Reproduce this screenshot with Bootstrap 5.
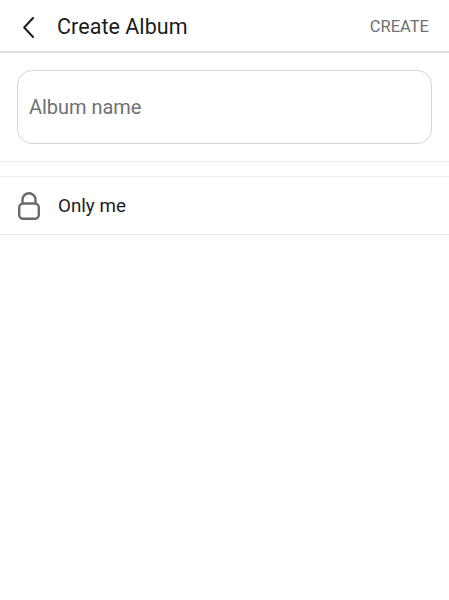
<!DOCTYPE html>
<html lang="en"><head><meta charset="utf-8">
<link href="https://cdn.jsdelivr.net/npm/bootstrap@5.3.0/dist/css/bootstrap.min.css" rel="stylesheet">
<style>
html,body{height:600px;overflow:hidden;background:#fff;font-family:Roboto,"Liberation Sans",sans-serif}
.top-bar{height:53px;border-bottom:2px solid #e0e0e4;padding:3px 20px 0 23px}
.top-title{font-size:21.5px;color:#1c1c1e;margin-left:23px;letter-spacing:.05px}
.top-action{font-size:16.5px;color:#6f7075}
.name-wrap{padding:17px;border-bottom:1px solid #ececee}
.name-box{height:74px;border:1px solid #d2d4d9;border-radius:15px;padding:0 11px;font-size:20px;color:#707074;letter-spacing:-.03px}
.priv-row{margin-top:14px;height:59px;padding:0 18px;border-top:1px solid #ececee;border-bottom:1px solid #ececee}
.priv-text{font-size:18.8px;color:#1c1c1e;margin-left:18px;padding-top:2px}
</style></head><body>
<div class="top-bar d-flex align-items-center">
<svg width="11" height="21" viewBox="0 0 11 21" fill="none" stroke="#1c1c1e" stroke-width="2" stroke-linecap="round" stroke-linejoin="round"><path d="M10 1 1.2 10.5 10 20"/></svg>
<div class="top-title flex-grow-1">Create Album</div>
<div class="top-action">CREATE</div>
</div>
<div class="name-wrap"><div class="name-box d-flex align-items-center">Album name</div></div>
<div class="priv-row d-flex align-items-center">
<svg width="22" height="28" viewBox="0 0 22 28" fill="none" stroke="#69696e" stroke-width="2.4"><rect x="1.2" y="11.5" width="19.6" height="15.3" rx="4"/><path d="M4.5 11.5V7.5a6.5 6.3 0 0 1 13 0V11.5"/></svg>
<div class="priv-text">Only me</div>
</div>
</body></html>
